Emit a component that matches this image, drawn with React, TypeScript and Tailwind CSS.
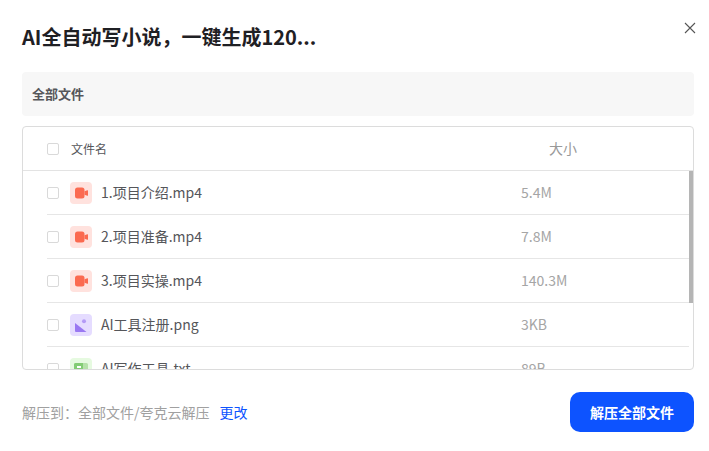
const font = { fontFamily: '"Noto Sans CJK SC", "Noto Sans", sans-serif' };

function Box() {
  return <span className="block w-3 h-3 shrink-0 rounded-[2px] border border-[#d9d9d9] bg-white" />;
}

function VideoIcon() {
  return (
    <span className="w-[22px] h-[22px] rounded-[4px] bg-[#ffe2de] flex items-center justify-center shrink-0">
      <svg width="16" height="16" viewBox="0 0 16 16">
        <rect x="2" y="2.5" width="9.5" height="11" rx="2.5" fill="#fb6a50" />
        <path d="M11.5 6.2l2.8-1c.4-.1.7.1.7.5v4.6c0 .4-.3.6-.7.5l-2.8-1z" fill="#fb6a50" />
      </svg>
    </span>
  );
}

function ImageIcon() {
  return (
    <span className="w-[22px] h-[22px] rounded-[4px] bg-[#e5dcff] flex items-center justify-center shrink-0">
      <svg width="16" height="16" viewBox="0 0 16 16">
        <path d="M2 6 L13.5 15 H3 a1 1 0 0 1-1-1z" fill="#9a78f2" />
        <circle cx="11" cy="4.2" r="2" fill="#b49af6" />
      </svg>
    </span>
  );
}

function TextIcon() {
  return (
    <span className="w-[22px] h-[22px] rounded-[4px] bg-[#e6fae0] flex items-center justify-center shrink-0">
      <svg width="16" height="16" viewBox="0 0 16 16">
        <rect x="1" y="2" width="14" height="13" rx="1.5" fill="#b5e2a8" />
        <path d="M2.5 2H10v13H2.5A1.5 1.5 0 0 1 1 13.5v-10A1.5 1.5 0 0 1 2.5 2z" fill="#83cc74" />
        <rect x="4" y="5" width="4" height="2" fill="#fff" />
        <rect x="4" y="9" width="2.5" height="2" fill="#fff" />
      </svg>
    </span>
  );
}

const rows = [
  { name: '1.项目介绍.mp4', size: '5.4M', icon: <VideoIcon /> },
  { name: '2.项目准备.mp4', size: '7.8M', icon: <VideoIcon /> },
  { name: '3.项目实操.mp4', size: '140.3M', icon: <VideoIcon /> },
  { name: 'AI工具注册.png', size: '3KB', icon: <ImageIcon /> },
  { name: 'AI写作工具.txt', size: '89B', icon: <TextIcon /> },
];

export default function App() {
  return (
    <div style={font} className="w-[709px] h-[451px] bg-white overflow-hidden relative pl-[22px] pr-[15px] pt-[22px]">
      <svg className="absolute top-[22px] right-[13px]" width="12" height="12" viewBox="0 0 12 12">
        <path d="M1 1l10 10M11 1L1 11" stroke="#555" strokeWidth="1.1" fill="none" />
      </svg>
      <h1 className="text-[20px] leading-[30px] font-bold text-[#1f2024]">AI全自动写小说，一键生成120...</h1>
      <div className="mt-[20px] h-[44px] rounded-[4px] bg-[#f7f7f7] flex items-center pl-[10px] text-[13px] font-semibold text-[#55565a]">全部文件</div>
      <div className="mt-[10px] h-[244px] rounded-[4px] border border-[#dcdcdc] relative overflow-hidden">
        <div className="h-[44px] flex items-center pl-[24px] border-b border-[#e3e3e3]">
          <Box />
          <span className="ml-[12px] text-[12px] text-[#55565a]">文件名</span>
          <span className="absolute left-[526px] text-[14px] text-[#999]">大小</span>
        </div>
        <div className="pl-[24px] pr-[4px]">
          {rows.map((r) => (
            <div key={r.name} className="h-[44px] flex items-center border-b border-[#e6e6e6] shrink-0">
              <Box />
              <span className="ml-[11px]">{r.icon}</span>
              <span className="ml-[9px] w-[420px] text-[14px] text-[#55565a]">{r.name}</span>
              <span className="text-[14px] text-[#a5a5a5]">{r.size}</span>
            </div>
          ))}
        </div>
        <div className="absolute right-0 top-[44px] w-[4px] h-[132px] bg-[#b5b5b5]" />
      </div>
      <div className="mt-[22px] flex items-center justify-between">
        <div className="text-[14px] text-[#a0a0a0]">
          解压到：全部文件/夸克云解压
          <span className="ml-[10px] text-[#0d53ff]">更改</span>
        </div>
        <button className="w-[124px] h-[40px] rounded-[10px] bg-[#0d53ff] text-white text-[14px] font-bold">解压全部文件</button>
      </div>
    </div>
  );
}
